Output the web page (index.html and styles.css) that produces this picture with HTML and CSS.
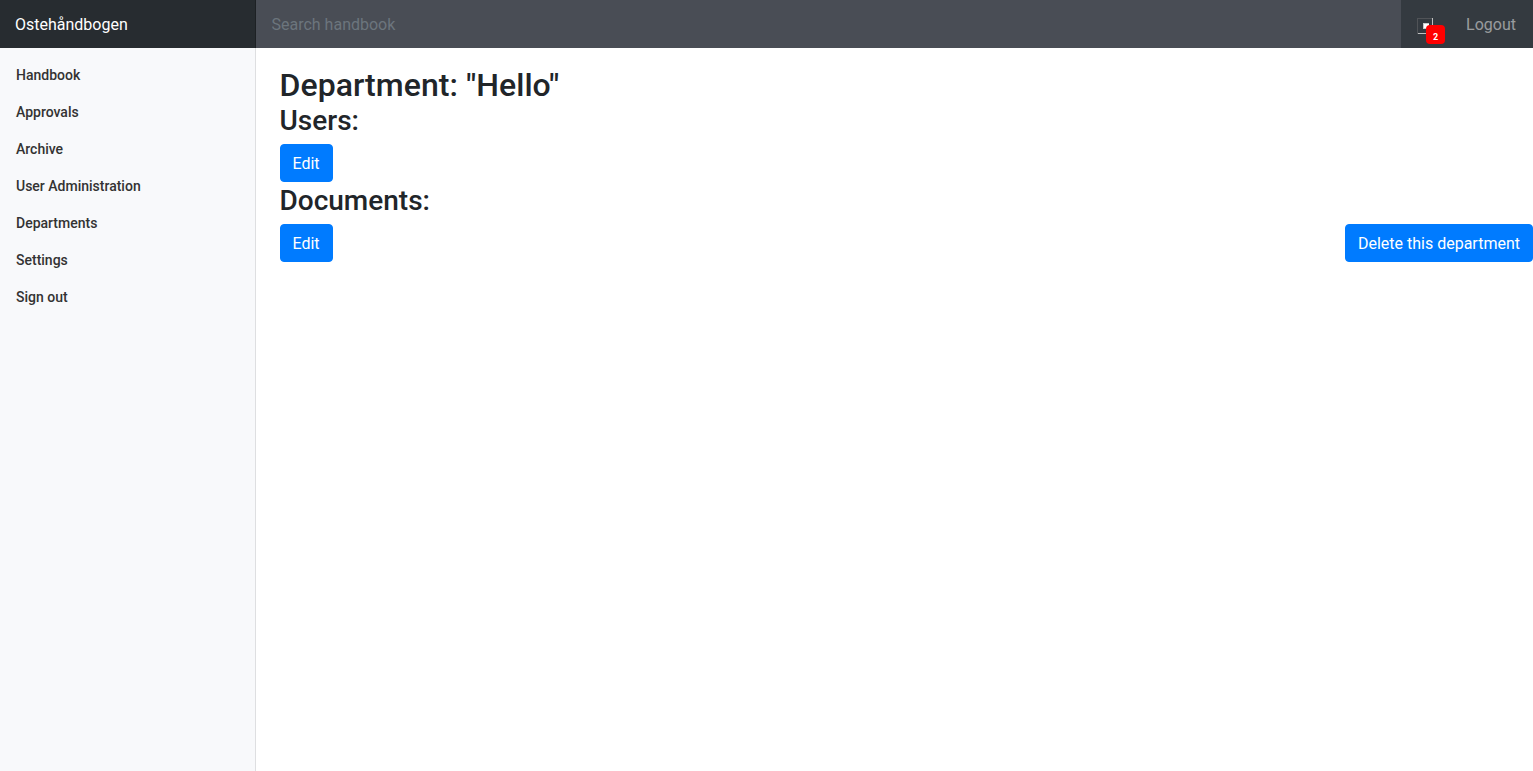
FILE: index.html
```html
<!DOCTYPE html>
<html lang="en">
<head>
<meta charset="utf-8">
<title>Ostehåndbogen</title>
<link rel="stylesheet" href="styles.css">
</head>
<body>
<nav class="navbar">
  <a class="brand">Ostehåndbogen</a>
  <input class="search" type="text" placeholder="Search handbook" aria-label="Search handbook">
  <div class="actions">
    <a class="notifications">
      <svg class="notify-icon" width="16" height="16" viewBox="0 0 16 16" shape-rendering="crispEdges">
        <path d="M.5 16V.5H15" fill="none" stroke="#505357"/>
        <path d="M1 15.5h14.5V0" fill="none" stroke="#c0c0c0"/>
        <path d="M6 5h6v6H6z" fill="#c8cacb"/>
        <path d="M7 6h5v4H7z" fill="#fff"/>
      </svg>
      <span class="badge">2</span>
    </a>
    <a class="logout">Logout</a>
  </div>
</nav>
<div class="layout">
  <aside class="sidebar">
    <a class="side-link">Handbook</a>
    <a class="side-link">Approvals</a>
    <a class="side-link">Archive</a>
    <a class="side-link">User Administration</a>
    <a class="side-link">Departments</a>
    <a class="side-link">Settings</a>
    <a class="side-link">Sign out</a>
  </aside>
  <main class="content">
    <h2 class="title">Department: "Hello"</h2>
    <h3 class="subtitle">Users:</h3>
    <div class="row"><a class="btn">Edit</a></div>
    <h3 class="subtitle">Documents:</h3>
    <div class="row"><a class="btn">Edit</a><a class="btn">Delete this department</a></div>
  </main>
</div>
</body>
</html>
```
FILE: styles.css
```css
* { box-sizing: border-box; }
body {
  margin: 0;
  height: 100vh;
  display: flex;
  flex-direction: column;
  overflow: hidden;
  background: #fff;
  color: #212529;
  font: 400 16px/1.5 Roboto, sans-serif;
}
.navbar {
  display: flex;
  flex: none;
  height: 48px;
  background: #343a40;
}
.brand {
  flex: 0 0 16.6667%;
  padding: 13px 15px 11px;
  color: #fff;
  background: #272c30;
  box-shadow: inset -1px 0 0 rgba(0, 0, 0, .25);
}
.search {
  flex: 1;
  min-width: 0;
  padding: 13px 16px 11px;
  border: 0;
  background: #494d55;
  color: #fff;
  font: inherit;
}
.search::placeholder { color: #6c757d; opacity: 1; }
.actions {
  display: flex;
  align-items: center;
  padding: 0 17px 0 16px;
}
.notifications {
  position: relative;
  width: 16px;
  height: 16px;
  margin: 4px 33px 0 0;
}
.notify-icon { display: block; }
.badge {
  position: absolute;
  left: 9px;
  top: 7px;
  width: 19px;
  height: 19px;
  border-radius: 4px;
  background: #f00;
  color: #fff;
  font-size: 9px;
  font-weight: 700;
  line-height: 25px;
  text-align: center;
}
.logout { padding-top: 2px; color: rgba(255, 255, 255, .5); }
.layout { display: flex; flex: 1; }
.sidebar {
  flex: 0 0 16.6667%;
  padding-top: 8px;
  background: #f8f9fb;
  box-shadow: inset -1px 0 0 rgba(0, 0, 0, .1);
}
.side-link {
  display: block;
  padding: 9px 16px 7px;
  color: #333;
  font-size: 14px;
  font-weight: 500;
  line-height: 21px;
}
.content { flex: 1; padding: 18px 0 0 24px; }
.title, .subtitle { margin: 0; font-weight: 500; line-height: 1.2; }
.title { font-size: 32px; letter-spacing: .05px; }
.subtitle { margin-bottom: 6px; font-size: 28px; }
.row { display: flex; justify-content: space-between; margin-bottom: 2px; }
.btn {
  padding: 7px 12px 5px;
  border: 1px solid #007bff;
  border-radius: 4px;
  background: #007bff;
  color: #fff;
}
```
